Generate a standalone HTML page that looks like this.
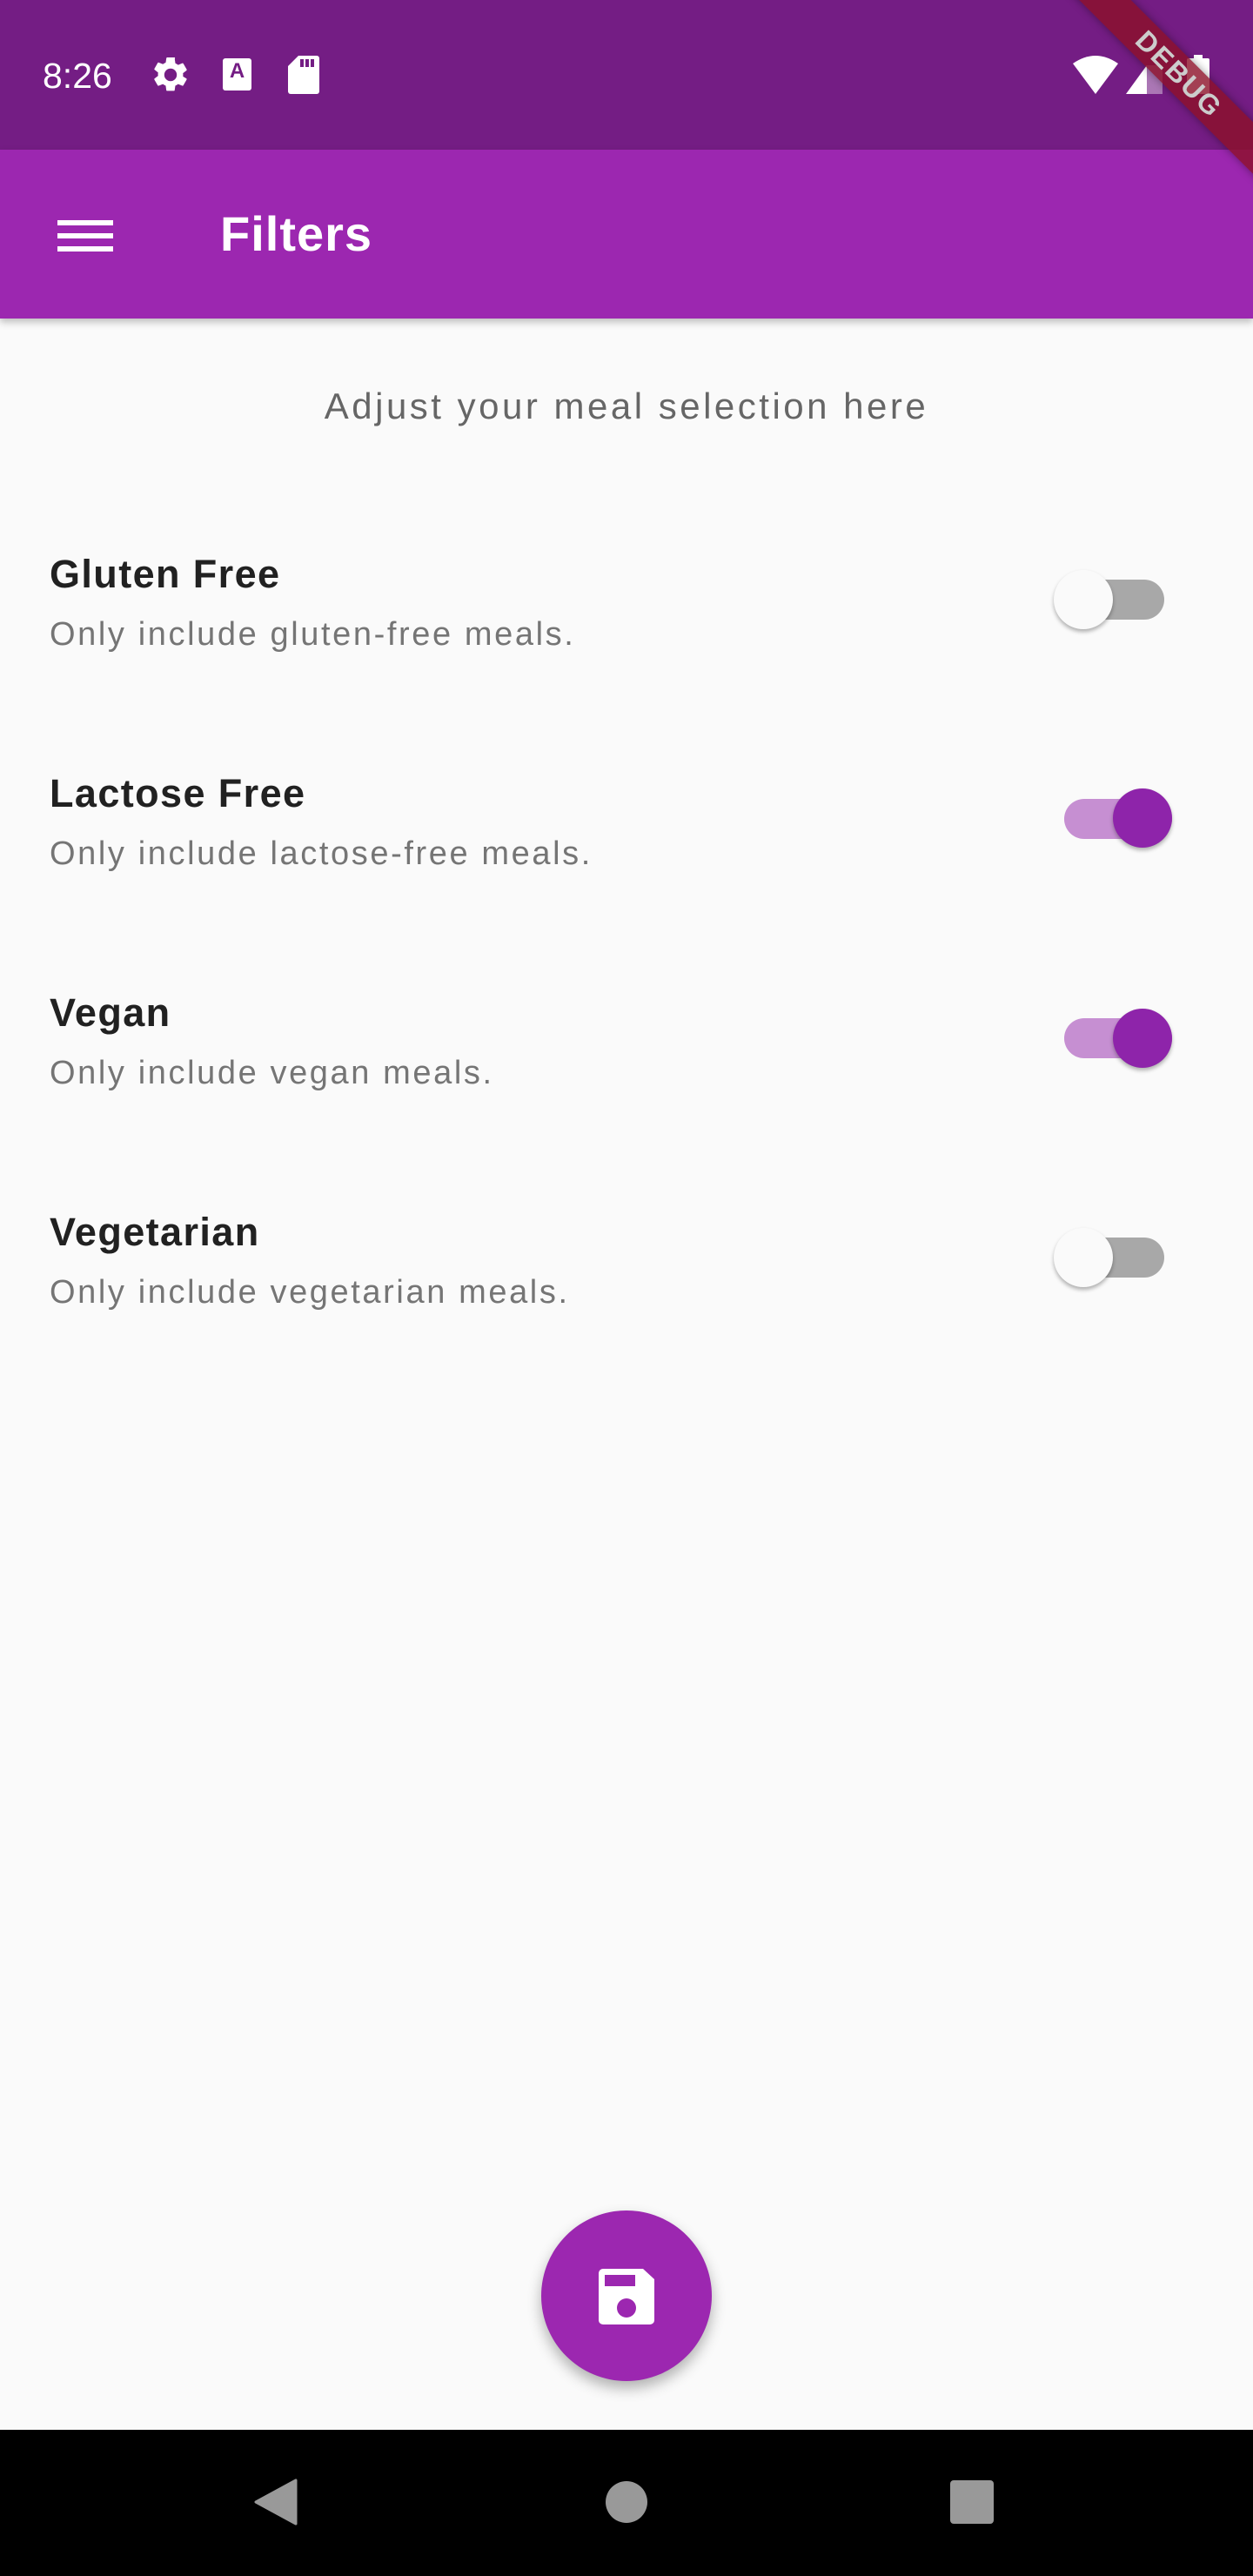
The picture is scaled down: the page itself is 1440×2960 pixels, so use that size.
<!DOCTYPE html>
<html><head><meta charset="utf-8">
<style>
*{margin:0;padding:0;box-sizing:border-box}
html,body{width:1440px;height:2960px;overflow:hidden;background:#fafafa;font-family:"Liberation Sans",sans-serif;position:relative}
.abs{position:absolute}
.status{left:0;top:0;width:1440px;height:172px;background:#741d84}
.appbar{left:0;top:172px;width:1440px;height:194px;background:#9c27b0;box-shadow:0 4px 8px rgba(0,0,0,.25)}
.title{font-weight:bold;font-size:45px;color:#212121;left:57px;letter-spacing:1.4px}
.sub{font-size:38px;color:#757575;left:57px;letter-spacing:2.6px}
.track{height:46px;border-radius:23px;width:124px}
.thumb{width:68px;height:68px;border-radius:50%;box-shadow:0 3px 5px rgba(0,0,0,.3)}
</style></head><body>
<div class="abs status"></div>
<div class="abs" style="left:49px;top:62px;color:#fff;font-size:41px;line-height:50px">8:26</div>
<svg class="abs" style="left:172px;top:62px" width="48" height="48" viewBox="0 0 24 24"><path fill="#fff" d="M19.14 12.94c.04-.3.06-.61.06-.94s-.02-.64-.07-.94l2.030-1.58a.49.49 0 0 0 .12-.61l-1.92-3.32a.49.49 0 0 0-.59-.22l-2.39.96a7 7 0 0 0-1.62-.94l-.36-2.54A.48.48 0 0 0 13.92 2h-3.84a.48.48 0 0 0-.48.41l-.36 2.54c-.59.24-1.13.57-1.62.94l-2.39-.96a.48.48 0 0 0-.59.22L2.72 8.47a.47.47 0 0 0 .12.61l2.03 1.58c-.05.3-.09.63-.09.94s.02.64.07.94l-2.03 1.58a.49.49 0 0 0-.12.61l1.92 3.32c.12.22.37.29.59.22l2.39-.96c.5.38 1.030.7 1.62.94l.36 2.54c.05.24.24.41.48.41h3.84c.24 0 .44-.17.47-.41l.36-2.54c.59-.24 1.13-.56 1.62-.94l2.39.96c.22.08.47 0 .59-.22l1.92-3.32a.47.47 0 0 0-.12-.61zM12 15.6A3.6 3.6 0 1 1 12 8.4a3.6 3.6 0 0 1 0 7.2z"/></svg>
<div class="abs" style="left:256px;top:67px;width:33px;height:37px;background:#fff;border-radius:3px;color:#741d84;font-weight:bold;font-size:24px;text-align:center;line-height:30px">A</div>
<svg class="abs" style="left:331px;top:64px" width="36" height="44" viewBox="0 0 36 44"><path fill="#fff" d="M12 0h21a3 3 0 0 1 3 3v38a3 3 0 0 1-3 3H3a3 3 0 0 1-3-3V12z"/><rect x="14" y="4" width="4" height="9" fill="#741d84"/><rect x="20" y="4" width="4" height="9" fill="#741d84"/><rect x="26" y="4" width="4" height="9" fill="#741d84"/></svg>
<svg class="abs" style="left:1232px;top:63px" width="54" height="45" viewBox="0 0 54 45"><path fill="#fff" d="M1 10Q27-8 53 10L27 45z"/></svg>
<svg class="abs" style="left:1294px;top:75px" width="42" height="33" viewBox="0 0 42 33"><path fill="#fff" d="M24 0V33H0z"/><rect x="24" y="0" width="18" height="33" fill="#fff" opacity=".4"/></svg>
<svg class="abs" style="left:1364px;top:63px" width="26" height="45" viewBox="0 0 26 45"><rect x="8" y="0" width="10" height="5" fill="#fff"/><rect x="0" y="4" width="26" height="41" rx="2" fill="#fff"/></svg>
<div class="abs appbar"></div>
<div class="abs" style="left:1195px;top:64px;width:320px;height:42px;background:rgba(140,16,40,.8);transform:rotate(45deg);color:#ccc;font-weight:bold;font-size:32px;line-height:42px;text-align:center;letter-spacing:2px;box-shadow:0 0 10px rgba(0,0,0,.4)">DEBUG</div>
<div class="abs" style="left:66px;top:253px;width:64px;height:6px;background:#fff"></div>
<div class="abs" style="left:66px;top:268px;width:64px;height:6px;background:#fff"></div>
<div class="abs" style="left:66px;top:283px;width:64px;height:6px;background:#fff"></div>
<div class="abs" style="left:253px;top:234px;color:#fff;font-weight:bold;font-size:56px;line-height:70px;letter-spacing:1px">Filters</div>
<div class="abs" style="left:0;top:441px;width:1440px;text-align:center;font-size:42px;color:#666;line-height:52px;letter-spacing:3.5px">Adjust your meal selection here</div>

<div class="abs title" style="top:634px">Gluten Free</div>
<div class="abs sub" style="top:708px">Only include gluten-free meals.</div>
<div class="abs track" style="left:1214px;top:666px;background:#a8a8a8"></div>
<div class="abs thumb" style="left:1211px;top:655px;background:#fafafa"></div>

<div class="abs title" style="top:886px">Lactose Free</div>
<div class="abs sub" style="top:960px">Only include lactose-free meals.</div>
<div class="abs track" style="left:1223px;top:918px;background:#c68fd2"></div>
<div class="abs thumb" style="left:1279px;top:906px;background:#8e24aa"></div>

<div class="abs title" style="top:1138px">Vegan</div>
<div class="abs sub" style="top:1212px">Only include vegan meals.</div>
<div class="abs track" style="left:1223px;top:1170px;background:#c68fd2"></div>
<div class="abs thumb" style="left:1279px;top:1159px;background:#8e24aa"></div>

<div class="abs title" style="top:1390px">Vegetarian</div>
<div class="abs sub" style="top:1464px">Only include vegetarian meals.</div>
<div class="abs track" style="left:1214px;top:1422px;background:#a8a8a8"></div>
<div class="abs thumb" style="left:1211px;top:1411px;background:#fafafa"></div>

<div class="abs" style="left:622px;top:2540px;width:196px;height:196px;border-radius:50%;background:#9c27b0;box-shadow:0 8px 16px rgba(0,0,0,.3)"></div>
<svg class="abs" style="left:688px;top:2607px" width="64" height="64" viewBox="0 0 64 64"><path fill="#fff" d="M5 0h46l13 12v47a5 5 0 0 1-5 5H5a5 5 0 0 1-5-5V5a5 5 0 0 1 5-5z"/><rect x="7" y="7" width="35" height="13" fill="#9c27b0"/><circle cx="32" cy="45" r="11" fill="#9c27b0"/></svg>

<div class="abs" style="left:0;top:2792px;width:1440px;height:168px;background:#000"></div>
<svg class="abs" style="left:290px;top:2848px" width="52" height="54" viewBox="0 0 52 54"><path fill="#999" d="M50 2V52L4 27z" stroke="#999" stroke-width="3" stroke-linejoin="round"/></svg>
<div class="abs" style="left:696px;top:2851px;width:48px;height:48px;border-radius:50%;background:#999"></div>
<div class="abs" style="left:1092px;top:2850px;width:50px;height:50px;border-radius:4px;background:#999"></div>
</body></html>
